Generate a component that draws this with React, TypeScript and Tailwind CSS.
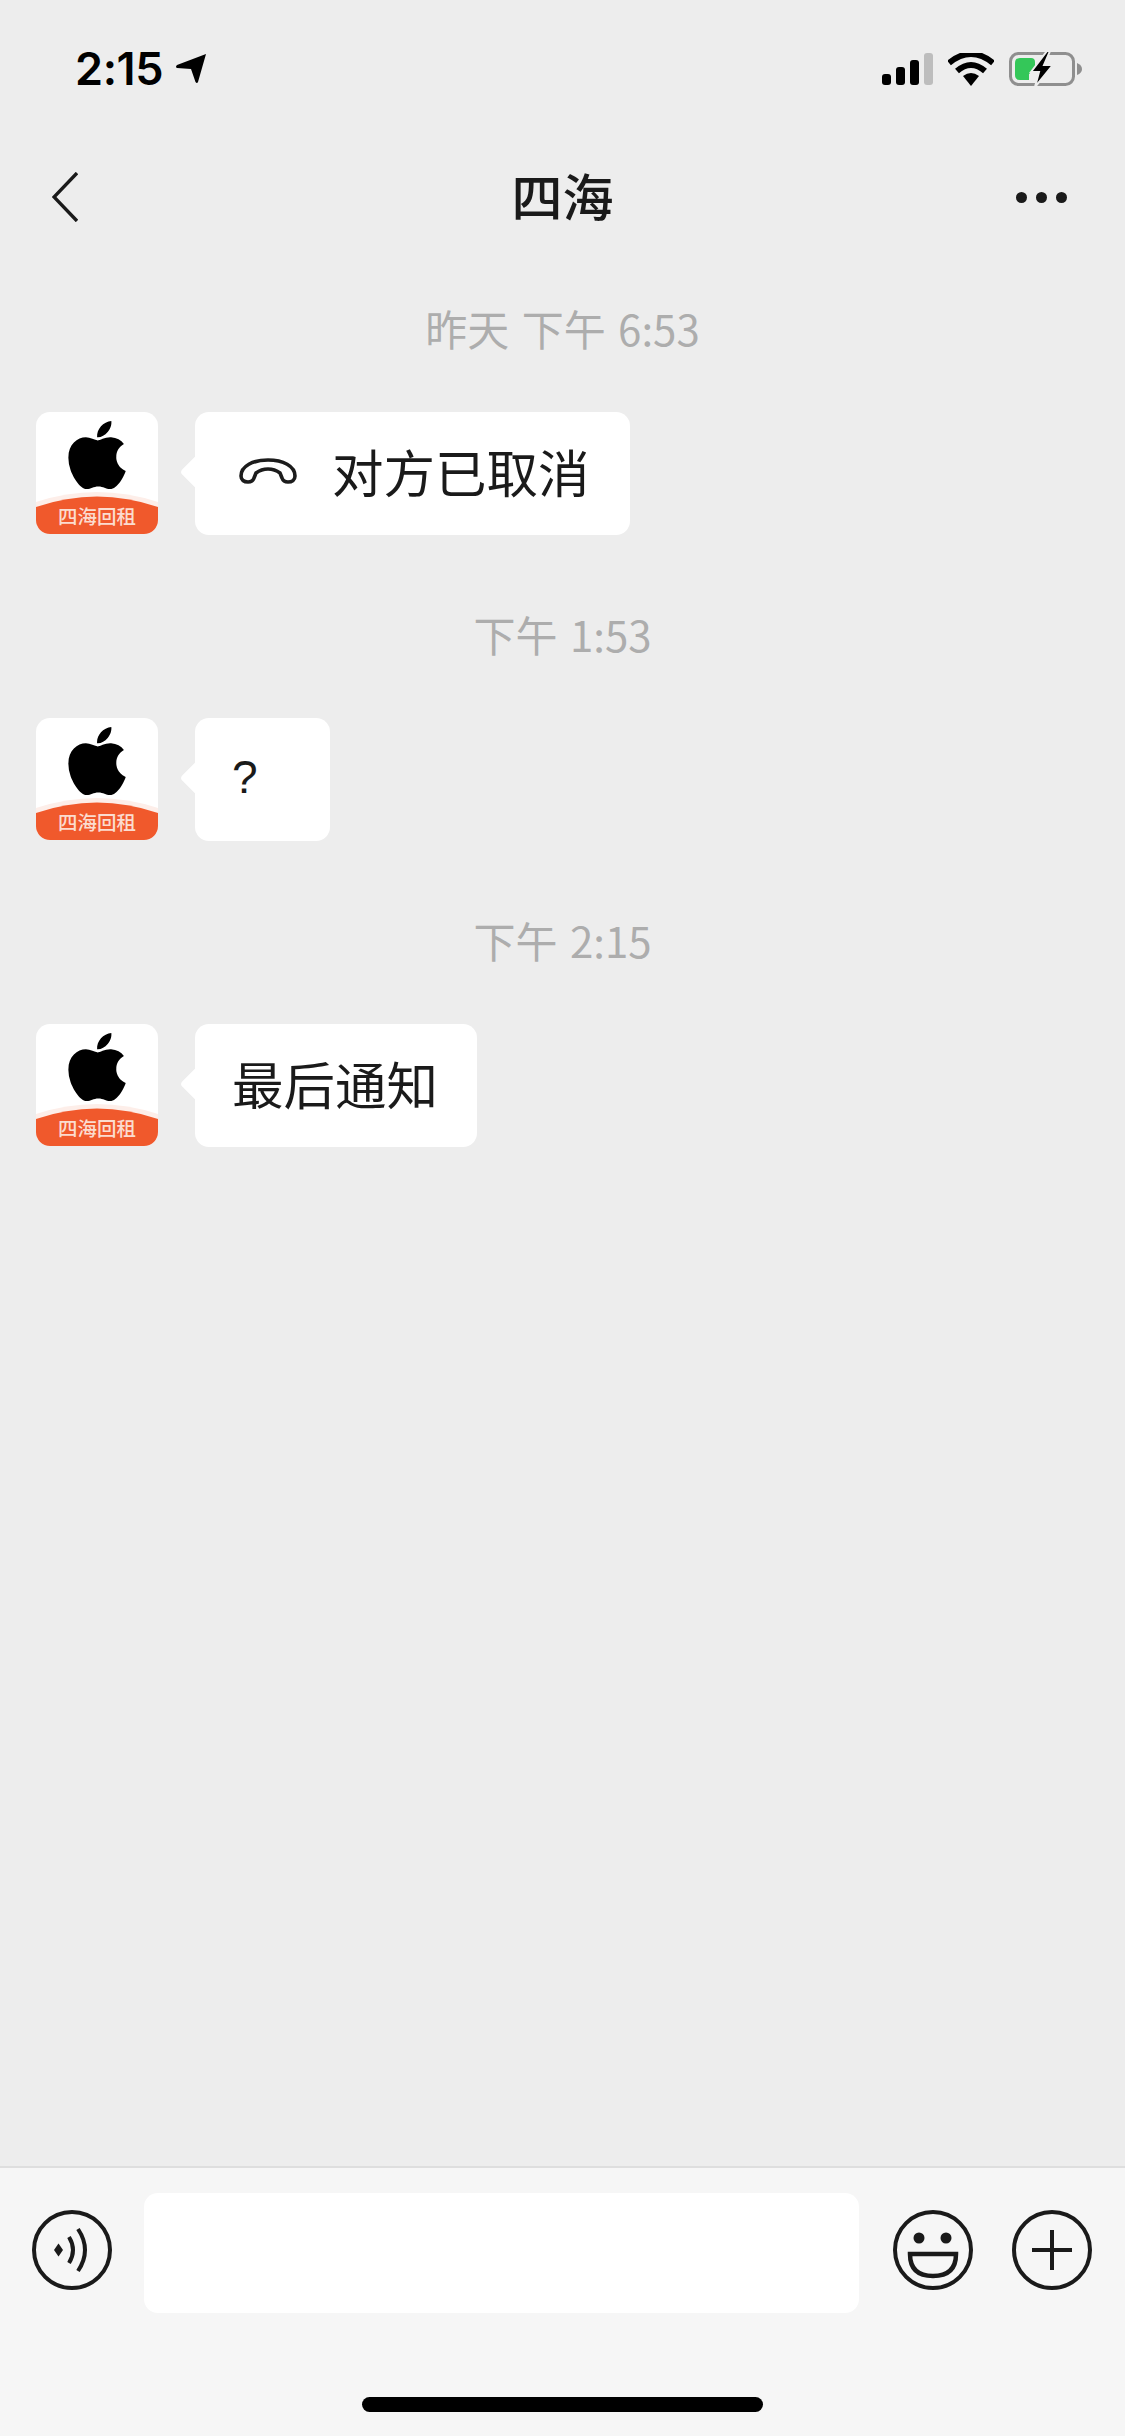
import React from "react";
import { FaApple } from "react-icons/fa";

const cjk = "font-['Noto_Sans_CJK_SC','Noto_Sans',sans-serif]";

function Avatar() {
  return (
    <div className="relative h-[122px] w-[122px] shrink-0 overflow-hidden rounded-[14px] bg-white">
      <div className="flex h-[85px] items-start justify-center pt-[4px]">
        <FaApple className="h-[78px] w-[68px] text-black" />
      </div>
      <svg className="absolute left-0 top-[80px] h-[42px] w-[122px]" viewBox="0 0 122 42" preserveAspectRatio="none">
        <path d="M0 13 Q61 -7 122 13 L122 42 L0 42 Z" fill="#fdeee9" transform="translate(0 -3)" />
        <path d="M0 15 Q61 -6 122 15 L122 42 L0 42 Z" fill="#f0592c" />
      </svg>
      <div className={`absolute bottom-[5px] left-0 right-0 text-center text-[19.5px] font-medium leading-[26px] text-[#fbdccf] ${cjk}`}>
        四海回租
      </div>
    </div>
  );
}

function HangUp() {
  return (
    <svg className="h-[26px] w-[58px]" viewBox="0 0 58 26" fill="none">
      <path
        d="M2 18 C2 8 14 2 29 2 C44 2 56 8 56 18 C56 22 53 24 49 24 C46 24 44 23 43 20 L41 15 C37 12 33 11 29 11 C25 11 21 12 17 15 L15 20 C14 23 12 24 9 24 C5 24 2 22 2 18 Z"
        stroke="#1c1c1c"
        strokeWidth="3.6"
        strokeLinejoin="round"
      />
    </svg>
  );
}

function Timestamp({ children }: { children: React.ReactNode }) {
  return (
    <div className={`flex h-[60px] items-center justify-center pb-[3px] text-[42px] text-[#adadad] [word-spacing:3px] ${cjk}`}>{children}</div>
  );
}

function Message({ children, className }: { children: React.ReactNode; className?: string }) {
  return (
    <div className="mt-[53px] flex items-start gap-[37px] pl-[36px]">
      <Avatar />
      <div className={`relative flex h-[123px] items-center rounded-[14px] bg-white text-[51.5px] text-[#1a1a1a] ${cjk} ${className ?? ""}`}>
        <div className="absolute left-[-10px] top-[47px] h-[26px] w-[26px] rotate-45 rounded-[4px] bg-white" />
        <div className="relative flex items-center pb-[5px]">{children}</div>
      </div>
    </div>
  );
}

function CircleIcon({ children }: { children: React.ReactNode }) {
  return (
    <svg className="h-[80px] w-[80px] shrink-0" viewBox="0 0 80 80" fill="none" stroke="#1a1a1a">
      <circle cx="40" cy="40" r="38" strokeWidth="4" />
      {children}
    </svg>
  );
}

export default function App() {
  return (
    <div className="flex h-[2436px] w-[1125px] flex-col overflow-hidden bg-[#ededed]">
      {/* Status bar */}
      <div className="flex h-[120px] items-start justify-between pl-[75px] pr-[43px] pt-[48px]">
        <div className="flex items-center gap-[13px] font-['Inter',sans-serif] text-[45px] font-semibold leading-[42px] tracking-[-0.4px] text-black">
          <span>2:15</span>
          <svg className="h-[30px] w-[31px]" viewBox="0 0 31 30">
            <path d="M30 0 L22 28 Q21 30 19.5 28 L15 15 L1 14 Q-1 13 1 11 Z" fill="#000" />
          </svg>
        </div>
        <div className="mt-[4px] flex items-center gap-[15px]">
          <svg className="h-[32px] w-[51px]" viewBox="0 0 51 32">
            <rect x="0" y="21" width="9" height="11" rx="3" fill="#000" />
            <rect x="14" y="14" width="9" height="18" rx="3" fill="#000" />
            <rect x="28" y="7" width="9" height="25" rx="3" fill="#000" />
            <rect x="42" y="0" width="9" height="32" rx="3" fill="#bdbdbd" />
          </svg>
          <svg className="h-[33px] w-[46px]" viewBox="0 0 46 33">
            <path d="M1 10 Q23 -8 45 10" stroke="#000" strokeWidth="6" fill="none" />
            <path d="M9 18 Q23 6 37 18" stroke="#000" strokeWidth="6" fill="none" />
            <path d="M15 23 Q23 17 31 23 L23 33 Z" fill="#000" />
          </svg>
          <svg className="h-[34px] w-[73px]" viewBox="0 0 73 34" fill="none">
            <rect x="1.5" y="1.5" width="63" height="31" rx="8" stroke="#8f8f8f" strokeWidth="3" />
            <path d="M68 11 Q73 13 73 17 Q73 21 68 23 Z" fill="#8f8f8f" />
            <path d="M6 11 Q6 6 11 6 L22 6 Q26 6 26 10 L26 17 L20 22 L20 28 L11 28 Q6 28 6 23 Z" fill="#34c759" />
            <path d="M38 -1 L22 20 L30 20 L26 35 L44 13 L35 13 L41 -1 Z" fill="#000" stroke="#ededed" strokeWidth="2" />
          </svg>
        </div>
      </div>

      {/* Navigation bar */}
      <div className="grid h-[155px] grid-cols-[1fr_auto_1fr] items-center px-[52px] pb-[1px]">
        <svg className="h-[50px] w-[26px]" viewBox="0 0 26 50" fill="none">
          <path d="M25 1 L2 25 L25 49" stroke="#1a1a1a" strokeWidth="3.4" />
        </svg>
        <div className={`-mt-[3px] text-[51px] font-medium leading-none text-[#1a1a1a] ${cjk}`}>四海</div>
        <div className="mr-[6px] flex gap-[9px] justify-self-end">
          <div className="h-[11px] w-[11px] rounded-full bg-[#1a1a1a]" />
          <div className="h-[11px] w-[11px] rounded-full bg-[#1a1a1a]" />
          <div className="h-[11px] w-[11px] rounded-full bg-[#1a1a1a]" />
        </div>
      </div>

      {/* Conversation */}
      <div className="flex-1 pt-[24px]">
        <Timestamp>昨天 下午 6:53</Timestamp>
        <Message className="w-[435px] pl-[44px]">
          <HangUp />
          <span className="ml-[35px] whitespace-nowrap">对方已取消</span>
        </Message>
        <div className="mt-[70px]">
          <Timestamp>下午 1:53</Timestamp>
        </div>
        <Message className="w-[135px] pl-[37px]">
          <span className="font-['Liberation_Sans',sans-serif] text-[46px]">?</span>
        </Message>
        <div className="mt-[70px]">
          <Timestamp>下午 2:15</Timestamp>
        </div>
        <Message className="w-[282px] pl-[37px]">
          <span className="whitespace-nowrap">最后通知</span>
        </Message>
      </div>

      {/* Input bar */}
      <div className="relative h-[270px] border-t-[2px] border-[#dedede] bg-[#f6f6f6]">
        <div className="flex items-start pl-[32px] pr-[33px] pt-[25px]">
          <div className="mt-[17px]">
            <CircleIcon>
              <path d="M22 40 L26.5 33.5 L31 40 L26.5 46.5 Z" fill="#1a1a1a" stroke="none" />
              <path d="M37 27 Q45 40 37 53" strokeWidth="4" />
              <path d="M46 19 Q60 40 46 61" strokeWidth="4" />
            </CircleIcon>
          </div>
          <div className="ml-[32px] h-[120px] w-[717px] rounded-[14px] bg-white" />
          <div className="ml-[34px] mt-[17px]">
            <CircleIcon>
              <circle cx="26" cy="28" r="5.5" fill="#1a1a1a" stroke="none" />
              <circle cx="53" cy="28" r="5.5" fill="#1a1a1a" stroke="none" />
              <path d="M17 44 L63 44 Q63 66 40 66 Q17 66 17 44 Z" strokeWidth="4.5" />
            </CircleIcon>
          </div>
          <div className="ml-[39px] mt-[17px]">
            <CircleIcon>
              <path d="M40 20 L40 60 M20 40 L60 40" strokeWidth="4" />
            </CircleIcon>
          </div>
        </div>
        <div className="absolute bottom-[24px] left-[362px] h-[15px] w-[401px] rounded-full bg-black" />
      </div>
    </div>
  );
}
